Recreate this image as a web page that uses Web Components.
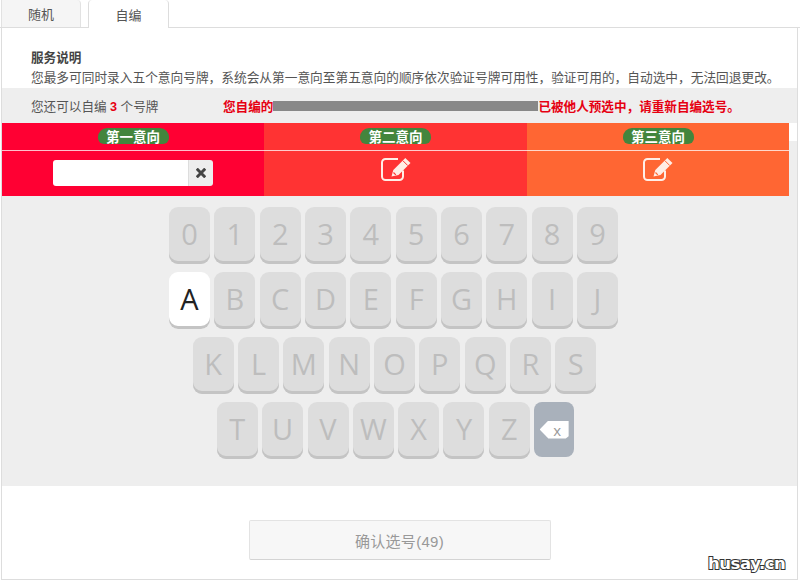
<!DOCTYPE html>
<html lang="zh">
<head>
<meta charset="utf-8">
<title>自编</title>
<style>
  html, body { margin: 0; padding: 0; background: #fff; }
  body { width: 800px; height: 581px; overflow: hidden; position: relative;
    font-family: "Liberation Sans", "Noto Sans CJK SC", sans-serif; }
</style>
</head>
<body>
<plate-page></plate-page>

<script>
const FONT = `"Liberation Sans", "Noto Sans CJK SC", sans-serif`;

class PlateTabs extends HTMLElement {
  constructor() { super(); this.attachShadow({ mode: 'open' }); }
  connectedCallback() {
    this.shadowRoot.innerHTML = `
      <style>
        :host { display: flex; height: 28px; box-sizing: border-box; padding-left: 1px; gap: 7px;
          border-bottom: 1px solid #ddd; font-size: 13px; color: #555; }
        .tab { width: 80px; height: 27px; box-sizing: border-box; display: flex; align-items: center; justify-content: center;
          background: #f5f5f5; border: 1px solid #e2e2e2; border-top: 0; border-bottom: 0; border-radius: 0 4px 0 0; }
        .tab.on { width: 81px; background: #fff; height: 28px; border-radius: 4px 4px 0 0; border-left-color: #ddd; border-right-color: #ddd; }
      </style>
      <div class="tab">随机</div>
      <div class="tab on">自编</div>`;
  }
}

class PlateNotice extends HTMLElement {
  constructor() { super(); this.attachShadow({ mode: 'open' }); }
  connectedCallback() {
    this.shadowRoot.innerHTML = `
      <style>
        :host { display: block; padding: 21px 0 0 29px; height: 60px; box-sizing: border-box; color: #555; font-size: 12.7px; }
        h4 { margin: 0; font-size: 12.6px; line-height: 18px; font-weight: bold; color: #444; }
        p { margin: 2px 0 0; line-height: 18px; white-space: nowrap; }
      </style>
      <h4>服务说明</h4>
      <p>您最多可同时录入五个意向号牌，系统会从第一意向至第五意向的顺序依次验证号牌可用性，验证可用的，自动选中，无法回退更改。</p>`;
  }
}

class PlateStatus extends HTMLElement {
  constructor() { super(); this.attachShadow({ mode: 'open' }); }
  connectedCallback() {
    this.shadowRoot.innerHTML = `
      <style>
        :host { display: flex; align-items: center; height: 35px; box-sizing: border-box; padding-left: 29px; background: #eee;
          font-size: 12.6px; color: #555; white-space: nowrap; }
        .left { width: 192px; }
        b { color: #e60012; }
        .warn { display: flex; align-items: center; color: #e60012; font-weight: bold; }
        .mask { width: 265px; height: 10px; background: #888; }
      </style>
      <span class="left">您还可以自编 <b>3</b> 个号牌</span>
      <span class="warn">您自编的<span class="mask"></span>已被他人预选中，请重新自编选号。</span>`;
  }
}

class IntentCol extends HTMLElement {
  constructor() { super(); this.attachShadow({ mode: 'open' }); }
  connectedCallback() {
    const color = this.getAttribute('color');
    const editing = this.hasAttribute('editing');
    const body = editing
      ? `<div class="field"><div class="input"></div><div class="clear">
           <svg width="10" height="10" viewBox="0 0 10 10"><path d="M1.8 1.8 8.2 8.2M8.2 1.8 1.8 8.2" stroke="#444" stroke-width="3" stroke-linecap="square"/></svg>
         </div></div>`
      : `<svg class="edit" width="30" height="24" viewBox="0 0 30 24">
           <path d="M22 13.5V19.5a3.5 3.5 0 0 1-3.5 3.5H4.5a3.5 3.5 0 0 1-3.5-3.5V5.500a3.500 3.500 0 0 1 3.500-3.500H17" fill="none" stroke="#ffeee6" stroke-width="2"/>
           <path d="M10.500 19.500 12.300 13 24.300 1 29.500 6 17.500 18Z" fill="#ffeee6"/>
           <path d="M21.800 3.600 26.800 8.600" stroke="${color}" stroke-width="1"/>
           <path d="M12.500 15.500 14.800 17.800" stroke="${color}" stroke-width="1.200"/>
         </svg>`;
    this.shadowRoot.innerHTML = `
      <style>
        :host { display: block; width: 263px; background: ${color}; color: #fff; }
        :host(:first-child), :host(:nth-child(3)) { width: 262px; }
        .head { height: 27px; box-sizing: border-box; padding-top: 5px; display: flex; justify-content: center; }
        .pill { width: 71px; height: 16px; border-radius: 9px 9px 6px 6px; background: #43853d; font-size: 13.5px; font-weight: bold;
          line-height: 20px; text-align: center; overflow: hidden; white-space: nowrap; }
        .rule { height: 1px; background: rgba(255,255,255,.75); }
        .body { height: 45px; display: flex; justify-content: center; align-items: flex-start; }
        .field { display: flex; margin-top: 9px; height: 26px; width: 160px; border-radius: 3px; overflow: hidden; }
        .input { flex: 1; background: #fff; }
        .clear { width: 24px; background: #eee; border-left: 1px solid #ddd; display: flex; align-items: center; justify-content: center; }
        .edit { margin-top: 6px; }
      </style>
      <div class="head"><div class="pill"><slot></slot></div></div>
      <div class="rule"></div>
      <div class="body">${body}</div>`;
  }
}

class KeyCap extends HTMLElement {
  constructor() { super(); this.attachShadow({ mode: 'open' }); }
  connectedCallback() {
    this.shadowRoot.innerHTML = `
      <style>
        :host { display: flex; align-items: center; justify-content: center; width: 41px; height: 57px; box-sizing: border-box;
          padding-bottom: 4px; border-radius: 9px; background: #ddd; box-shadow: inset 0 -3px 0 #c4c4c4;
          font-family: "Open Sans", sans-serif; font-size: 29px; color: #bdbdbd; }
        :host([active]) { background: #fff; color: #222; }
      </style>
      <slot></slot>`;
  }
}

class BackKey extends HTMLElement {
  constructor() { super(); this.attachShadow({ mode: 'open' }); }
  connectedCallback() {
    this.shadowRoot.innerHTML = `
      <style>
        :host { display: flex; align-items: center; justify-content: center; width: 40px; height: 55px; border-radius: 8px; background: #a9b1bb; }
        .shape { width: 29px; height: 18px; background: #fff; clip-path: polygon(0 50%, 30% 0, 100% 0, 100% 88%, 90% 100%, 30% 100%);
          display: flex; align-items: center; justify-content: center; padding-left: 6px; box-sizing: border-box;
          font: 15px/18px "Open Sans", sans-serif; color: #999; }
      </style>
      <div class="shape">x</div>`;
  }
}

class KeyBoard extends HTMLElement {
  constructor() { super(); this.attachShadow({ mode: 'open' }); }
  connectedCallback() {
    const rows = ['0123456789', 'ABCDEFGHIJ', 'KLMNOPQRS', 'TUVWXYZ'];
    const html = rows.map((r, i) => `<div class="row r${i}">${[...r].map(c =>
      `<key-cap${c === 'A' ? ' active' : ''}>${c}</key-cap>`).join('')}${i === 3 ? '<back-key></back-key>' : ''}</div>`).join('');
    this.shadowRoot.innerHTML = `
      <style>
        :host { display: flex; flex-direction: column; gap: 8px; height: 290px; box-sizing: border-box; padding: 11px 0 0; margin-right: 12px; }
        .row { display: flex; justify-content: center; align-items: flex-start; gap: 4.33px; }
        .r2 { padding-left: 2px; }
        .r3 { padding-left: 4px; }
      </style>
      ${html}`;
  }
}

class ConfirmBar extends HTMLElement {
  constructor() { super(); this.attachShadow({ mode: 'open' }); }
  connectedCallback() {
    this.shadowRoot.innerHTML = `
      <style>
        :host { display: flex; justify-content: center; padding: 34px 0 0 1px; }
        button { width: 302px; height: 40px; border: 1px solid #e3e3e3; border-bottom-color: #d4d4d4; border-radius: 2px; background: #f7f7f7;
          font: 15px ${FONT}; color: #999; padding: 0 1px 0 0; letter-spacing: .3px; }
      </style>
      <button><slot></slot></button>`;
  }
}

class PlatePage extends HTMLElement {
  constructor() { super(); this.attachShadow({ mode: 'open' }); }
  connectedCallback() {
    this.shadowRoot.innerHTML = `
      <style>
        :host { display: block; width: 800px; height: 581px; position: relative; font-family: ${FONT}; }
        .panel { margin: 0 2px 0 1px; height: 552px; box-sizing: border-box; border: 1px solid #ddd; border-top: 0; }
        .top { display: flex; align-items: flex-start; }
        .cols { display: flex; }
        .gap { flex: 1; height: 18px; background: #fff; }
        .band { background: #eee; }
        .mark { position: absolute; left: 708px; top: 553px; font: bold 16.5px/22px "DejaVu Sans", sans-serif; letter-spacing: -.45px;
          color: #fff; -webkit-text-stroke: 2px #333; paint-order: stroke fill; }
      </style>
      <plate-tabs></plate-tabs>
      <div class="panel">
        <plate-notice></plate-notice>
        <plate-status></plate-status>
        <div class="band">
          <div class="top">
            <div class="cols">
              <intent-col color="#ff0033" editing>第一意向</intent-col>
              <intent-col color="#ff3333">第二意向</intent-col>
              <intent-col color="#ff6633">第三意向</intent-col>
            </div>
            <div class="gap"></div>
          </div>
          <key-board></key-board>
        </div>
        <confirm-bar>确认选号(49)</confirm-bar>
      </div>
      <div class="mark">husay.cn</div>`;
  }
}

customElements.define('plate-tabs', PlateTabs);
customElements.define('plate-notice', PlateNotice);
customElements.define('plate-status', PlateStatus);
customElements.define('intent-col', IntentCol);
customElements.define('key-cap', KeyCap);
customElements.define('back-key', BackKey);
customElements.define('key-board', KeyBoard);
customElements.define('confirm-bar', ConfirmBar);
customElements.define('plate-page', PlatePage);
</script>
</body>
</html>
